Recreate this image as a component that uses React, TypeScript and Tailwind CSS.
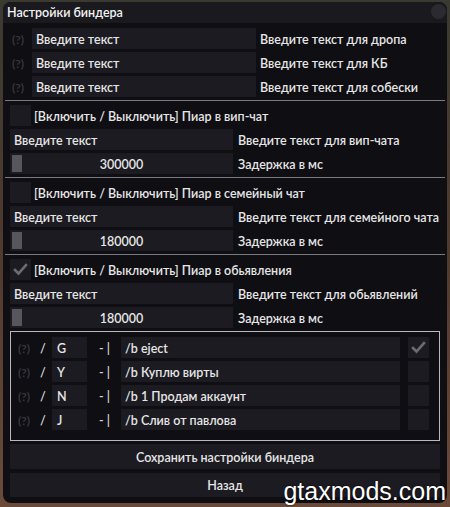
import React from "react";

const font = "font-['Lato','Noto_Sans',sans-serif]";

function Check() {
  return (
    <svg width="21" height="21" viewBox="0 0 21 21" className="block">
      <polyline points="5,11 8.5,14.5 16,6" fill="none" stroke="#6c6b70" strokeWidth="2.6" strokeLinecap="square" />
    </svg>
  );
}

function Box({ checked }: { checked?: boolean }) {
  return (
    <div className="w-[21px] h-[21px] shrink-0 bg-[#1c1b21]">{checked ? <Check /> : null}</div>
  );
}

function Input({ text, w, pl = "pl-[4px]" }: { text: string; w: string; pl?: string }) {
  return (
    <div className={`${w} h-[21px] shrink-0 bg-[#1c1b21] flex items-center pt-[3px] ${pl} text-[#e6e6e6] whitespace-nowrap overflow-hidden`}>
      {text}
    </div>
  );
}

function Label({ text, pl, color = "text-[#e6e6e6]", w = "", size = "" }: { text: string; pl: string; color?: string; w?: string; size?: string }) {
  return (
    <div className={`h-[21px] flex items-center pt-[3px] shrink-0 whitespace-nowrap ${pl} ${color} ${w} ${size}`}>{text}</div>
  );
}

function Sep() {
  return <div className="h-[1px] mb-[1px] bg-[#7a797f] -mx-[5px] shrink-0" />;
}

function TopRow({ label }: { label: string }) {
  return (
    <div className="flex items-center h-[21px]">
      <Label text="(?)" pl="pl-[2px]" w="w-[22px]" color="text-[#3c3b41]" size="text-[12px]" />
      <Input text="Введите текст" w="w-[224px]" />
      <Label text={label} pl="pl-[4px]" />
    </div>
  );
}

function Section({ title, label, value, checked }: { title: string; label: string; value: string; checked?: boolean }) {
  return (
    <div className="flex flex-col gap-[3px]">
      <div className="flex items-center h-[21px]">
        <Box checked={checked} />
        <Label text={title} pl="pl-[3px]" />
      </div>
      <div className="flex items-center h-[21px]">
        <Input text="Введите текст" w="w-[223px]" />
        <Label text={label} pl="pl-[5px]" />
      </div>
      <div className="flex items-center h-[21px]">
        <div className="w-[223px] h-[21px] shrink-0 bg-[#1c1b21] relative flex items-center justify-center pt-[3px] text-[#e6e6e6]">
          <div className="absolute left-[2px] top-[2px] w-[10px] h-[17px] bg-[#57565c]" />
          <span className="relative">{value}</span>
        </div>
        <Label text="Задержка в мс" pl="pl-[5px]" />
      </div>
    </div>
  );
}

function BindRow({ key1, cmd, checked }: { key1: string; cmd: string; checked?: boolean }) {
  return (
    <div className="flex items-center h-[21px]">
      <Label text="(?)" pl="" w="w-[22px]" color="text-[#3c3b41]" size="text-[12px]" />
      <Label text="/" pl="" w="w-[12px]" color="text-[#d8d8d8]" />
      <Input text={key1} w="w-[35px]" pl="pl-[5px]" />
      <Label text="- |" pl="pl-[12px]" w="w-[34px]" color="text-[#d8d8d8]" />
      <Input text={cmd} w="w-[279px]" />
      <div className="ml-[8px]">
        <Box checked={checked} />
      </div>
    </div>
  );
}

export default function App() {
  return (
    <div className={`w-[450px] h-[507px] relative overflow-hidden bg-gradient-to-b from-[#3a3a31] via-[#4f3a2e] to-[#6b4a3a] ${font} font-semibold text-[12.5px] leading-none`}>
      <div className="ml-[3px] mt-[2px] w-[444px] h-[501px] rounded-[8px] bg-[#0f0e13] overflow-hidden flex flex-col">
        <div className="h-[21px] shrink-0 bg-[#1a191e] flex items-center justify-between pl-[4px] pr-[1px]">
          <span className="text-[#f2f2f2] text-[12.5px] pt-[2px]">Настройки биндера</span>
          <div className="w-[15px] h-[15px] rounded-full bg-[#2b2a30] -mt-[2px]" />
        </div>
        <div className="flex flex-col px-[7px] pt-[5px] gap-[3px]">
          <TopRow label="Введите текст для дропа" />
          <TopRow label="Введите текст для КБ" />
          <TopRow label="Введите текст для собески" />
          <Sep />
          <Section title="[Включить / Выключить] Пиар в вип-чат" label="Введите текст для вип-чата" value="300000" />
          <Sep />
          <Section title="[Включить / Выключить] Пиар в семейный чат" label="Введите текст для семейного чата" value="180000" />
          <Sep />
          <Section title="[Включить / Выключить] Пиар в обьявления" label="Введите текст для обьявлений" value="180000" checked />
          <div className="w-[430px] border border-[#b9b9bc] pl-[7px] pt-[5px] pb-[10px] flex flex-col gap-[3px]">
            <BindRow key1="G" cmd="/b eject" checked />
            <BindRow key1="Y" cmd="/b Куплю вирты" />
            <BindRow key1="N" cmd="/b 1 Продам аккаунт" />
            <BindRow key1="J" cmd="/b Слив от павлова" />
          </div>
          <div className="h-[25px] bg-[#1c1b21] flex items-center justify-center pt-[3px] text-[#e6e6e6]">Сохранить настройки биндера</div>
          <div className="h-[24px] mt-[1px] bg-[#1c1b21] flex items-center justify-center pt-[3px] text-[#e6e6e6]">Назад</div>
        </div>
      </div>
      <div className="absolute right-[4px] bottom-[1px] text-white text-[25px] leading-[30px] font-normal font-['Liberation_Sans',sans-serif] [text-shadow:0_0_2px_#000]">
        gtaxmods.com
      </div>
    </div>
  );
}
